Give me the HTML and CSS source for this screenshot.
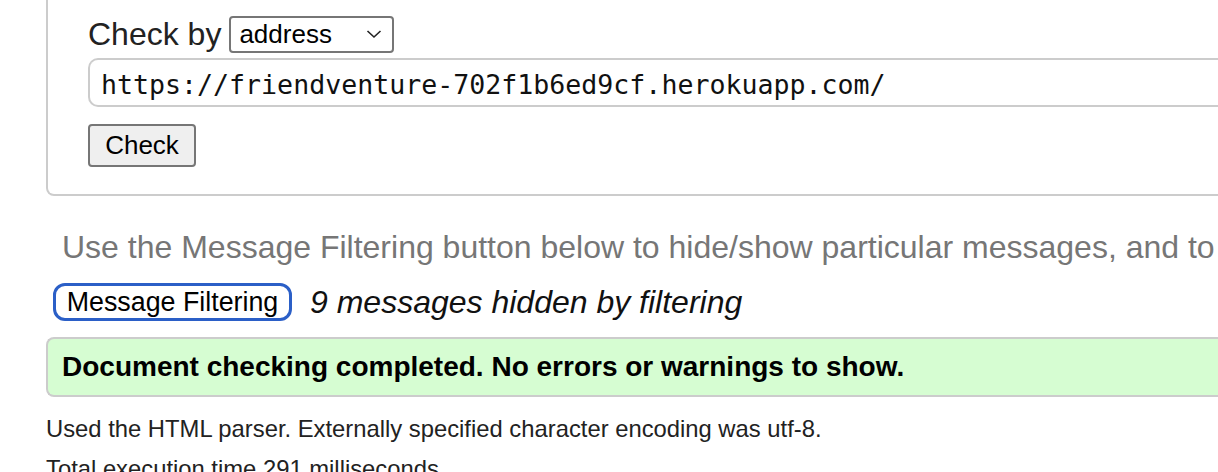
FILE: index.html
```html
<!DOCTYPE html>
<html lang="en">
<head>
<meta charset="utf-8">
<title>Nu Html Checker</title>
<link rel="stylesheet" href="styles.css">
</head>
<body>
<div class="page">
  <form class="check-form">
    <div class="by-row">
      <span class="by-label">Check by</span>
      <span class="select">address<svg class="chev" viewBox="0 0 16 10" width="16" height="10"><path d="M1.5 2 L8 8 L14.5 2" fill="none" stroke="#222" stroke-width="1.6"/></svg></span>
    </div>
    <div class="url-input">https://friendventure-702f1b6ed9cf.herokuapp.com/</div>
    <div class="btn-row"><span class="check-btn">Check</span></div>
  </form>
  <p class="hint">Use the Message Filtering button below to hide/show particular messages, and to</p>
  <div class="filter-row">
    <span class="filter-btn">Message Filtering</span>
    <span class="hidden-count">9 messages hidden by filtering</span>
  </div>
  <p class="success">Document checking completed. No errors or warnings to show.</p>
  <p class="details">Used the HTML parser. Externally specified character encoding was utf-8.</p>
  <p class="details">Total execution time 291 milliseconds.</p>
</div>
</body>
</html>
```
FILE: styles.css
```css
html, body {
  margin: 0;
  padding: 0;
  background: #fff;
  overflow: hidden;
}
body {
  font-family: "Liberation Sans", Arial, sans-serif;
  color: #222;
}
.page {
  width: 1500px;
  padding-left: 46px;
  display: flex;
  flex-direction: column;
  align-items: flex-start;
}
.check-form {
  align-self: stretch;
  border: 2px solid #cccccc;
  border-top: none;
  border-radius: 0 0 8px 8px;
  padding: 15px 0 27px 40px;
  display: flex;
  flex-direction: column;
  align-items: flex-start;
}
.by-row {
  display: flex;
  align-items: center;
  gap: 8px;
  height: 38px;
}
.by-label {
  font-size: 32px;
  color: #222;
}
.select {
  box-sizing: border-box;
  width: 165px;
  height: 37px;
  border: 2px solid #767676;
  border-radius: 4px;
  padding: 0 10px 0 8px;
  font-size: 26px;
  color: #000;
  display: flex;
  align-items: center;
  justify-content: space-between;
}
.url-input {
  box-sizing: border-box;
  align-self: stretch;
  height: 49px;
  margin-top: 5px;
  border: 2px solid #cccccc;
  border-right: none;
  border-radius: 10px 0 0 10px;
  padding-left: 11px;
  font-family: "DejaVu Sans Mono", monospace;
  font-size: 26.6px;
  line-height: 49px;
  color: #111;
}
.btn-row {
  margin-top: 17px;
}
.check-btn {
  box-sizing: border-box;
  display: inline-flex;
  align-items: center;
  justify-content: center;
  width: 108px;
  height: 43px;
  background: #efefef;
  border: 2px solid #767676;
  border-radius: 4px;
  font-size: 26px;
  color: #000;
}
.hint {
  margin: 33px 0 0 16px;
  font-size: 32px;
  line-height: 36px;
  color: #767676;
  white-space: nowrap;
}
.filter-row {
  display: flex;
  align-items: center;
  gap: 18px;
  margin: 18px 0 0 7px;
}
.filter-btn {
  box-sizing: border-box;
  display: inline-flex;
  align-items: center;
  justify-content: center;
  width: 239px;
  height: 38px;
  border: 3px solid #2b5fc7;
  border-radius: 12px;
  font-size: 26.8px;
  color: #000;
}
.hidden-count {
  font-style: italic;
  font-size: 32px;
  color: #111;
}
.success {
  box-sizing: border-box;
  align-self: stretch;
  margin: 16px 0 0 0;
  height: 60px;
  background: #d6fdd2;
  border: 2px solid #cccccc;
  border-right: none;
  border-radius: 8px 0 0 8px;
  padding-left: 14px;
  display: flex;
  align-items: center;
  font-weight: bold;
  font-size: 28px;
  color: #000;
}
.details {
  margin: 0;
  font-size: 23.8px;
  line-height: 40px;
  color: #222;
  white-space: nowrap;
}
.success + .details {
  margin-top: 12px;
}
```
